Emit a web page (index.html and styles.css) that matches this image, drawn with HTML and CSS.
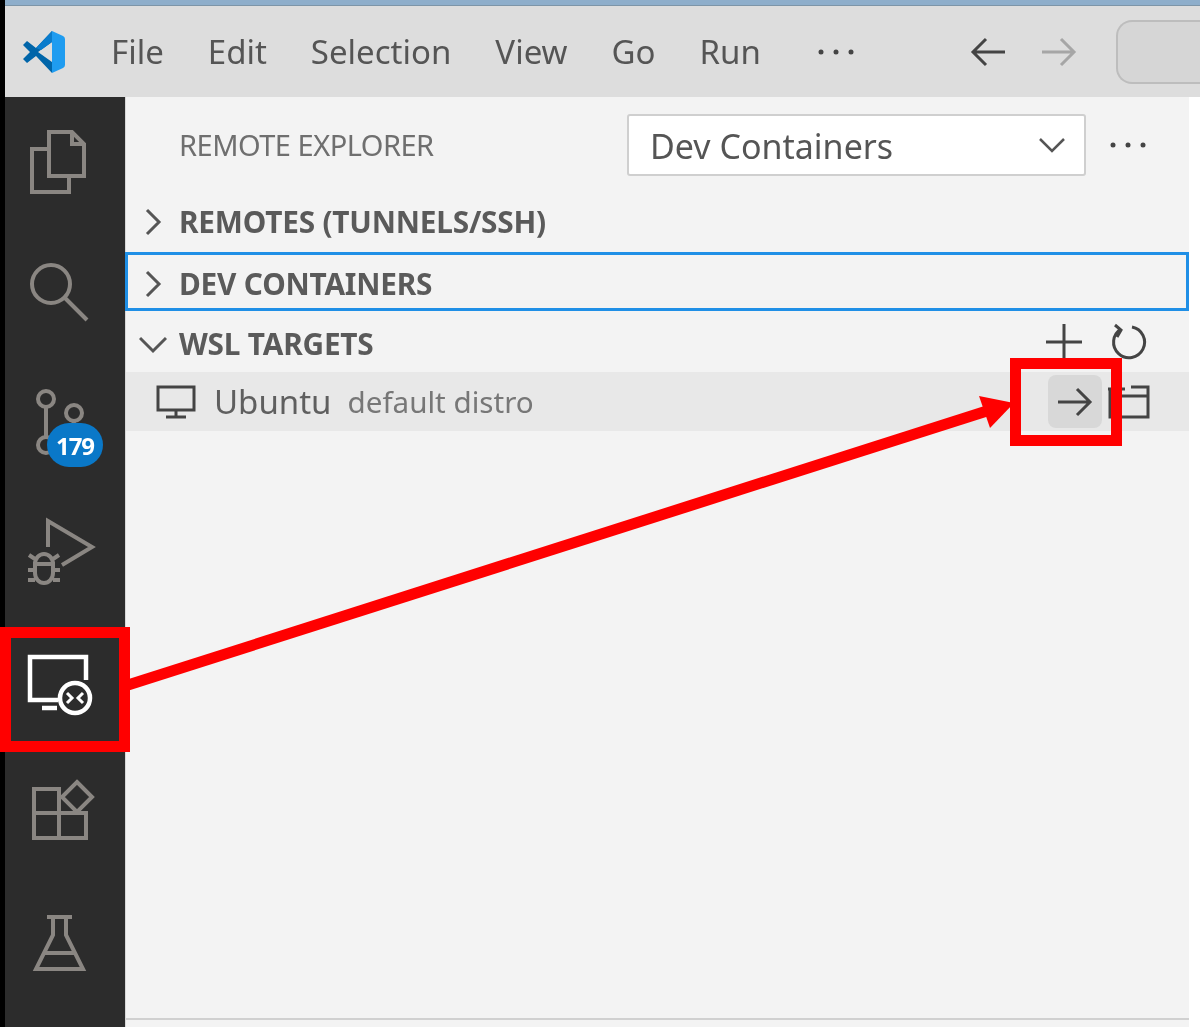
FILE: index.html
```html
<!DOCTYPE html>
<html lang="en">
<head>
<meta charset="utf-8">
<title>Remote Explorer</title>
<link rel="stylesheet" href="styles.css">
</head>
<body>
<div class="page">
  <div class="app">
    <div class="strip"></div>
    <header class="titlebar">
      <svg class="logo" viewBox="0 0 44 44" width="44" height="44">
        <path fill="#0065a9" d="M1 15 L5 11 L14 18 L30 1 L30 12 L16 22 L30 32 L30 43 L14 26 L5 33 L1 29 L8 22 Z"/>
        <path fill="#0a7ccc" d="M14 18 L30 1 L30 12 L19 20 Z"/>
        <path fill="#1f9cf0" d="M30 1 L41 6 Q43 7 43 9 L43 35 Q43 37 41 38 L30 43 Z"/>
      </svg>
      <nav class="menu">
        <span>File</span><span>Edit</span><span>Selection</span><span>View</span><span>Go</span><span>Run</span>
      </nav>
      <svg class="more" viewBox="0 0 36 8" width="36" height="8"><circle cx="3" cy="4" r="2.500"/><circle cx="18" cy="4" r="2.500"/><circle cx="33" cy="4" r="2.500"/></svg>
      <svg class="nav-back" viewBox="0 0 36 30" width="36" height="30"><path d="M35 15 H3 M16 2 L3 15 L16 28"/></svg>
      <svg class="nav-fwd" viewBox="0 0 36 30" width="36" height="30"><path d="M1 15 H33 M20 2 L33 15 L20 28"/></svg>
      <div class="command"></div>
    </header>
    <div class="main">
      <aside class="activity">
        <div class="act">
          <svg viewBox="0 0 80 80" width="80" height="80"><path d="M24 10 H47 L59 22 V54 H24 Z M47 10 V22 H59"/><path d="M24 27 H7 V70 H44 V54"/></svg>
        </div>
        <div class="act">
          <svg viewBox="0 0 80 80" width="80" height="80"><circle cx="26" cy="32" r="19"/><path d="M40 46 L62 68"/></svg>
        </div>
        <div class="act">
          <svg viewBox="0 0 80 80" width="80" height="80"><circle cx="21" cy="17" r="8"/><circle cx="49" cy="31" r="8"/><circle cx="21" cy="63" r="8"/><path d="M21 25 V55 M49 39 C49 50 30 48 25 56"/></svg>
          <span class="badge">179</span>
        </div>
        <div class="act">
          <svg viewBox="0 0 80 80" width="80" height="80"><path d="M23 35 V9 L67 35 L37 53"/><path d="M10 52 a9 10 0 0 1 18 0 Z M10 52 H28 V61 a9 10 0 0 1 -18 0 Z M10 58 H3 M28 58 H35 M10 68 H3 M28 68 H35 M10 47 L4 43 M28 47 L34 43"/></svg>
        </div>
        <div class="act act-on">
          <svg viewBox="0 0 80 80" width="80" height="80"><path d="M33 58 H5 V15 H61 V38"/><path d="M17 66 H32"/><circle cx="50" cy="56" r="15"/><path class="thin" d="M42 51 L47 56 L42 61 M58 51 L53 56 L58 61"/></svg>
        </div>
        <div class="act">
          <svg viewBox="0 0 80 80" width="80" height="80"><path d="M9 17 H34 V66 H9 Z M9 41 H61 V66 H34"/><path d="M52 10 L67 25 L52 40 L37 25 Z"/></svg>
        </div>
        <div class="act">
          <svg viewBox="0 0 80 80" width="80" height="80"><path d="M22 15 H47 M28 15 V33 L11 67 H58 L41 33 V15 M19 51 H50"/></svg>
        </div>
      </aside>
      <section class="sidebar">
        <div class="toolbar">
          <span class="view-title">REMOTE EXPLORER</span>
          <div class="select">
            <span class="select-text">Dev Containers</span>
            <svg viewBox="0 0 28 16" width="28" height="16"><path d="M2 2 L14 14 L26 2"/></svg>
          </div>
          <svg class="more tool-more" viewBox="0 0 36 8" width="36" height="8"><circle cx="3" cy="4" r="2.500"/><circle cx="18" cy="4" r="2.500"/><circle cx="33" cy="4" r="2.500"/></svg>
        </div>
        <div class="section">
          <svg class="twist" viewBox="0 0 28 28" width="28" height="28"><path d="M8 2 L20 14 L8 26"/></svg>
          <h2>REMOTES (TUNNELS/SSH)</h2>
        </div>
        <div class="section focused">
          <svg class="twist" viewBox="0 0 28 28" width="28" height="28"><path d="M8 2 L20 14 L8 26"/></svg>
          <h2>DEV CONTAINERS</h2>
        </div>
        <div class="section low">
          <svg class="twist" viewBox="0 0 28 28" width="28" height="28"><path d="M1 8 L14 21 L27 8"/></svg>
          <h2>WSL TARGETS</h2>
          <div class="sec-actions">
            <svg viewBox="0 0 40 40" width="40" height="40"><path d="M20 2 V38 M2 20 H38"/></svg>
            <svg viewBox="0 0 40 40" width="40" height="40"><path d="M12 7 A15.500 15.500 0 1 0 23 5 M6 3 L12 8 L8 15"/></svg>
          </div>
        </div>
        <div class="row">
          <svg class="monitor" viewBox="0 0 40 36" width="40" height="36"><path d="M2 3 H38 V26 H2 Z M20 26 V33 M10 33 H30"/></svg>
          <span class="row-name">Ubuntu</span>
          <span class="row-desc">default distro</span>
          <div class="row-actions">
            <div class="hover-btn">
              <svg viewBox="0 0 36 30" width="36" height="30"><path d="M1 15 H33 M20 2 L33 15 L20 28"/></svg>
            </div>
            <svg class="win" viewBox="0 0 42 36" width="42" height="36"><path d="M0 5 H17 M2 5 V33 H40 V3 H23 M14 12 H40"/></svg>
          </div>
        </div>
        <div class="foot"></div>
      </section>
      <div class="gutter"></div>
    </div>
  </div>
  <svg class="callout" viewBox="0 0 1200 1027" width="1200" height="1027">
    <path class="line" d="M128 685 L990 410"/>
    <path class="head" d="M979 396 L1014 403 L990 428 Z"/>
    <rect class="box" x="5.500" y="632.500" width="119" height="114"/>
    <rect class="box" x="1015.500" y="363.500" width="101" height="77"/>
  </svg>
</div>
</body>
</html>
```
FILE: styles.css
```css
* { box-sizing: border-box; }
html, body { margin: 0; padding: 0; background: #000; }
.page { position: relative; width: 1200px; height: 1027px; overflow: hidden; }
.app {
  width: 1200px; height: 1027px; padding-left: 5px;
  display: flex; flex-direction: column; background: #000;
  font-family: "Noto Sans", "Open Sans", sans-serif;
  filter: blur(0.6px);
}
.strip { height: 6px; background: #8eaecb; border-bottom: 1px solid #7d95a8; }
.titlebar { height: 91px; background: #dddddd; display: flex; align-items: center; position: relative; }
.logo { margin-left: 17px; }
.menu { display: flex; gap: 44px; margin-left: 45px; color: #555; font-size: 33px; }
.more { fill: #444; margin-left: 57px; }
.nav-back, .nav-fwd { fill: none; stroke-width: 3; }
.nav-back { stroke: #444; margin-left: 116px; }
.nav-fwd { stroke: #a6a6a6; margin-left: 35px; }
.command { margin-left: 39px; flex: 1; height: 64px; background: #d6d6d6; border: 2px solid #bdbdbd; border-right: 0; border-radius: 16px 0 0 16px; }
.main { flex: 1; display: flex; min-height: 0; }
.activity { width: 120px; background: #2c2c2c; display: flex; flex-direction: column; flex: none; }
.act { height: 130px; display: flex; align-items: center; justify-content: center; position: relative; }
.act svg { fill: none; stroke: #8a8682; stroke-width: 4; }
.act-on svg { stroke: #fff; stroke-width: 4.500; }
.act-on svg .thin { stroke-width: 3; }
.badge {
  position: absolute; left: 42px; top: 66px; width: 56px; height: 44px;
  border-radius: 22px; background: #0a78c8; color: #fff;
  font-size: 24px; font-weight: 700; letter-spacing: -1px; display: flex; align-items: center; justify-content: center;
}
.sidebar { flex: 1; background: #f3f3f3; display: flex; flex-direction: column; border-left: 1px solid #d8d8d8; }
.gutter { width: 11px; background: #fff; flex: none; }
.toolbar { height: 95px; display: flex; align-items: center; padding-left: 53px; flex: none; }
.view-title { color: #6f6f6f; font-size: 29px; width: 448px; letter-spacing: -0.500px; flex: none; white-space: nowrap; }
.select {
  width: 459px; height: 62px; background: #fff; border: 2px solid #cfcfcf; border-radius: 3px; flex: none;
  display: flex; align-items: center; justify-content: space-between; padding: 0 18px 0 21px;
  color: #555; font-size: 34px;
}
.select-text { padding-top: 2px; }
.select svg { fill: none; stroke: #555; stroke-width: 2.500; }
.tool-more { margin-left: 24px; flex: none; }
.section { height: 60px; display: flex; align-items: center; padding-left: 13px; flex: none; position: relative; }
.section h2 { margin: 0 0 0 12px; color: #5a5a5a; font-size: 29.800px; font-weight: 700; letter-spacing: -0.200px; line-height: 40px; }
.twist { fill: none; stroke: #555; stroke-width: 3; flex: none; }
.focused { outline: 3px solid #1f8fe6; outline-offset: -3px; margin-left: -1px; padding: 5px 0 0 14px; height: 59px; }
.low { padding-top: 4px; height: 61px; }
.sec-actions { position: absolute; right: 40px; top: 11px; display: flex; gap: 25px; }
.sec-actions svg { fill: none; stroke: #444; stroke-width: 3; }
.row { height: 59px; background: #e8e8e8; display: flex; align-items: center; padding-left: 30px; flex: none; position: relative; }
.monitor { fill: none; stroke: #444; stroke-width: 3; flex: none; }
.row-name { margin-left: 18px; color: #5f5f5f; font-size: 33px; }
.row-desc { margin-left: 16px; color: #777; font-size: 29.600px; }
.row-actions { position: absolute; left: 922px; top: 3px; display: flex; align-items: center; gap: 6px; }
.hover-btn { width: 54px; height: 53px; background: #d8d8d8; border-radius: 8px; display: flex; align-items: center; justify-content: center; }
.hover-btn svg { fill: none; stroke: #444; stroke-width: 3; }
.win { fill: none; stroke: #444; stroke-width: 3; }
.foot { margin-top: auto; height: 9px; border-top: 2px solid #d0d0d0; }
.callout { position: absolute; left: 0; top: 0; }
.line { stroke: #ff0000; stroke-width: 11; fill: none; }
.head { fill: #ff0000; }
.box { fill: none; stroke: #ff0000; stroke-width: 11; }
```
